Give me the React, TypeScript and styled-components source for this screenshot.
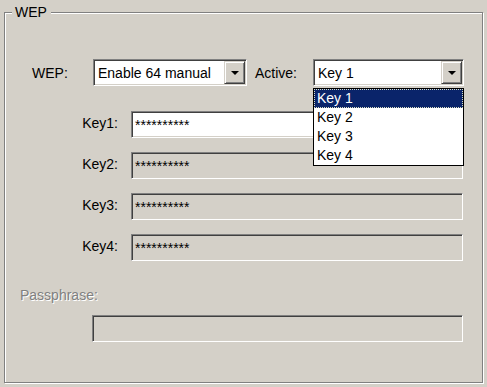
import React from 'react';
import styled, { createGlobalStyle } from 'styled-components';

const keys = ['Key1', 'Key2', 'Key3', 'Key4'];
const options = ['Key 1', 'Key 2', 'Key 3', 'Key 4'];

function App() {
  return (
    <>
      <GlobalStyle />
      <GroupBox>
        <Legend>WEP</Legend>
        <TopRow>
          <RowLabel $width={61}>WEP:</RowLabel>
          <Combo $width={154}>
            <ComboValue>Enable 64 manual</ComboValue>
            <ComboButton><Arrow /></ComboButton>
          </Combo>
          <RowLabel $width={58} $gap={8}>Active:</RowLabel>
          <Combo $width={151}>
            <ComboValue>Key 1</ComboValue>
            <ComboButton><Arrow /></ComboButton>
            <DropList>
              {options.map((o, i) => (
                <DropItem key={o} $selected={i === 0}>{o}</DropItem>
              ))}
            </DropList>
          </Combo>
        </TopRow>
        <KeyGrid>
          {keys.map((k, i) => (
            <React.Fragment key={k}>
              <KeyLabel>{k}:</KeyLabel>
              <Field $width={332} $disabled={i > 0}>**********</Field>
            </React.Fragment>
          ))}
        </KeyGrid>
        <Passphrase>Passphrase:</Passphrase>
        <PassField $width={371} $disabled />
      </GroupBox>
    </>
  );
}

export default App;

const GlobalStyle = createGlobalStyle`
  html, body {
    margin: 0;
    padding: 0;
    background: #d4d0c8;
  }
  body {
    width: 487px;
    height: 387px;
    overflow: hidden;
    font-family: "Liberation Sans", Arial, sans-serif;
    font-size: 14px;
    color: #000;
  }
`

const GroupBox = styled.fieldset`
  box-sizing: border-box;
  width: 479px;
  height: 378px;
  margin: 5px 0 0 4px;
  padding: 0;
  min-width: 0;
  border: 1px solid #808080;
  box-shadow: 1px 1px 0 #fff, inset 1px 1px 0 #fff;
`

const Legend = styled.legend`
  margin-left: 7px;
  padding: 0 4px 0 3px;
  line-height: 14px;
  background: #d4d0c8;
`

const TopRow = styled.div`
  display: flex;
  align-items: center;
  height: 27px;
  margin-top: 40px;
  padding-left: 27px;
`

const RowLabel = styled.span<{ $width: number; $gap?: number }>`
  flex-shrink: 0;
  width: ${p => p.$width}px;
  margin-left: ${p => p.$gap || 0}px;
`

const Combo = styled.div<{ $width: number }>`
  position: relative;
  box-sizing: border-box;
  display: flex;
  width: ${p => p.$width}px;
  height: 27px;
  padding: 1px;
  background: #fff;
  border: 1px solid;
  border-color: #808080 #fff #fff #808080;
  box-shadow: inset 1px 1px 0 #404040, inset -1px -1px 0 #d4d0c8;
`

const ComboValue = styled.div`
  flex: 1;
  display: flex;
  align-items: center;
  padding-left: 3px;
  white-space: nowrap;
  overflow: hidden;
`

const ComboButton = styled.div`
  box-sizing: border-box;
  width: 21px;
  display: flex;
  align-items: center;
  justify-content: center;
  background: #d4d0c8;
  border: 1px solid;
  border-color: #d4d0c8 #404040 #404040 #d4d0c8;
  box-shadow: inset 1px 1px 0 #fff, inset -1px -1px 0 #808080;
`

const Arrow = styled.span`
  width: 0;
  height: 0;
  border-left: 4px solid transparent;
  border-right: 4px solid transparent;
  border-top: 4px solid #000;
`

const DropList = styled.ul`
  position: absolute;
  top: 28px;
  left: -1px;
  z-index: 2;
  box-sizing: border-box;
  width: calc(100% + 2px);
  margin: 0;
  padding: 0;
  list-style: none;
  background: #fff;
  border: 1px solid #000;
`

const DropItem = styled.li<{ $selected?: boolean }>`
  height: 19px;
  line-height: 19px;
  padding-left: 3px;
  background: ${p => (p.$selected ? '#0a246a' : '#fff')};
  color: ${p => (p.$selected ? '#fff' : '#000')};
  outline: ${p => (p.$selected ? '1px dotted #d8dcc0' : 'none')};
  outline-offset: -1px;
`

const KeyGrid = styled.div`
  display: grid;
  grid-template-columns: 113px 332px;
  column-gap: 13px;
  row-gap: 14px;
  align-items: center;
  margin-top: 25px;
`

const KeyLabel = styled.span`
  text-align: right;
  padding-bottom: 3px;
`

const Field = styled.div<{ $width: number; $disabled?: boolean }>`
  box-sizing: border-box;
  display: flex;
  align-items: center;
  width: ${p => p.$width}px;
  height: 27px;
  padding: 0 3px;
  background: ${p => (p.$disabled ? '#d4d0c8' : '#fff')};
  border: 1px solid;
  border-color: #808080 #fff #fff #808080;
  box-shadow: inset 1px 1px 0 #404040, inset -1px -1px 0 #d4d0c8;
`

const Passphrase = styled.div`
  margin-top: 26px;
  padding-left: 15px;
  line-height: 16px;
  color: #808080;
  text-shadow: 1px 1px 0 #fff;
`

const PassField = styled(Field)`
  margin: 12px 0 0 87px;
`
